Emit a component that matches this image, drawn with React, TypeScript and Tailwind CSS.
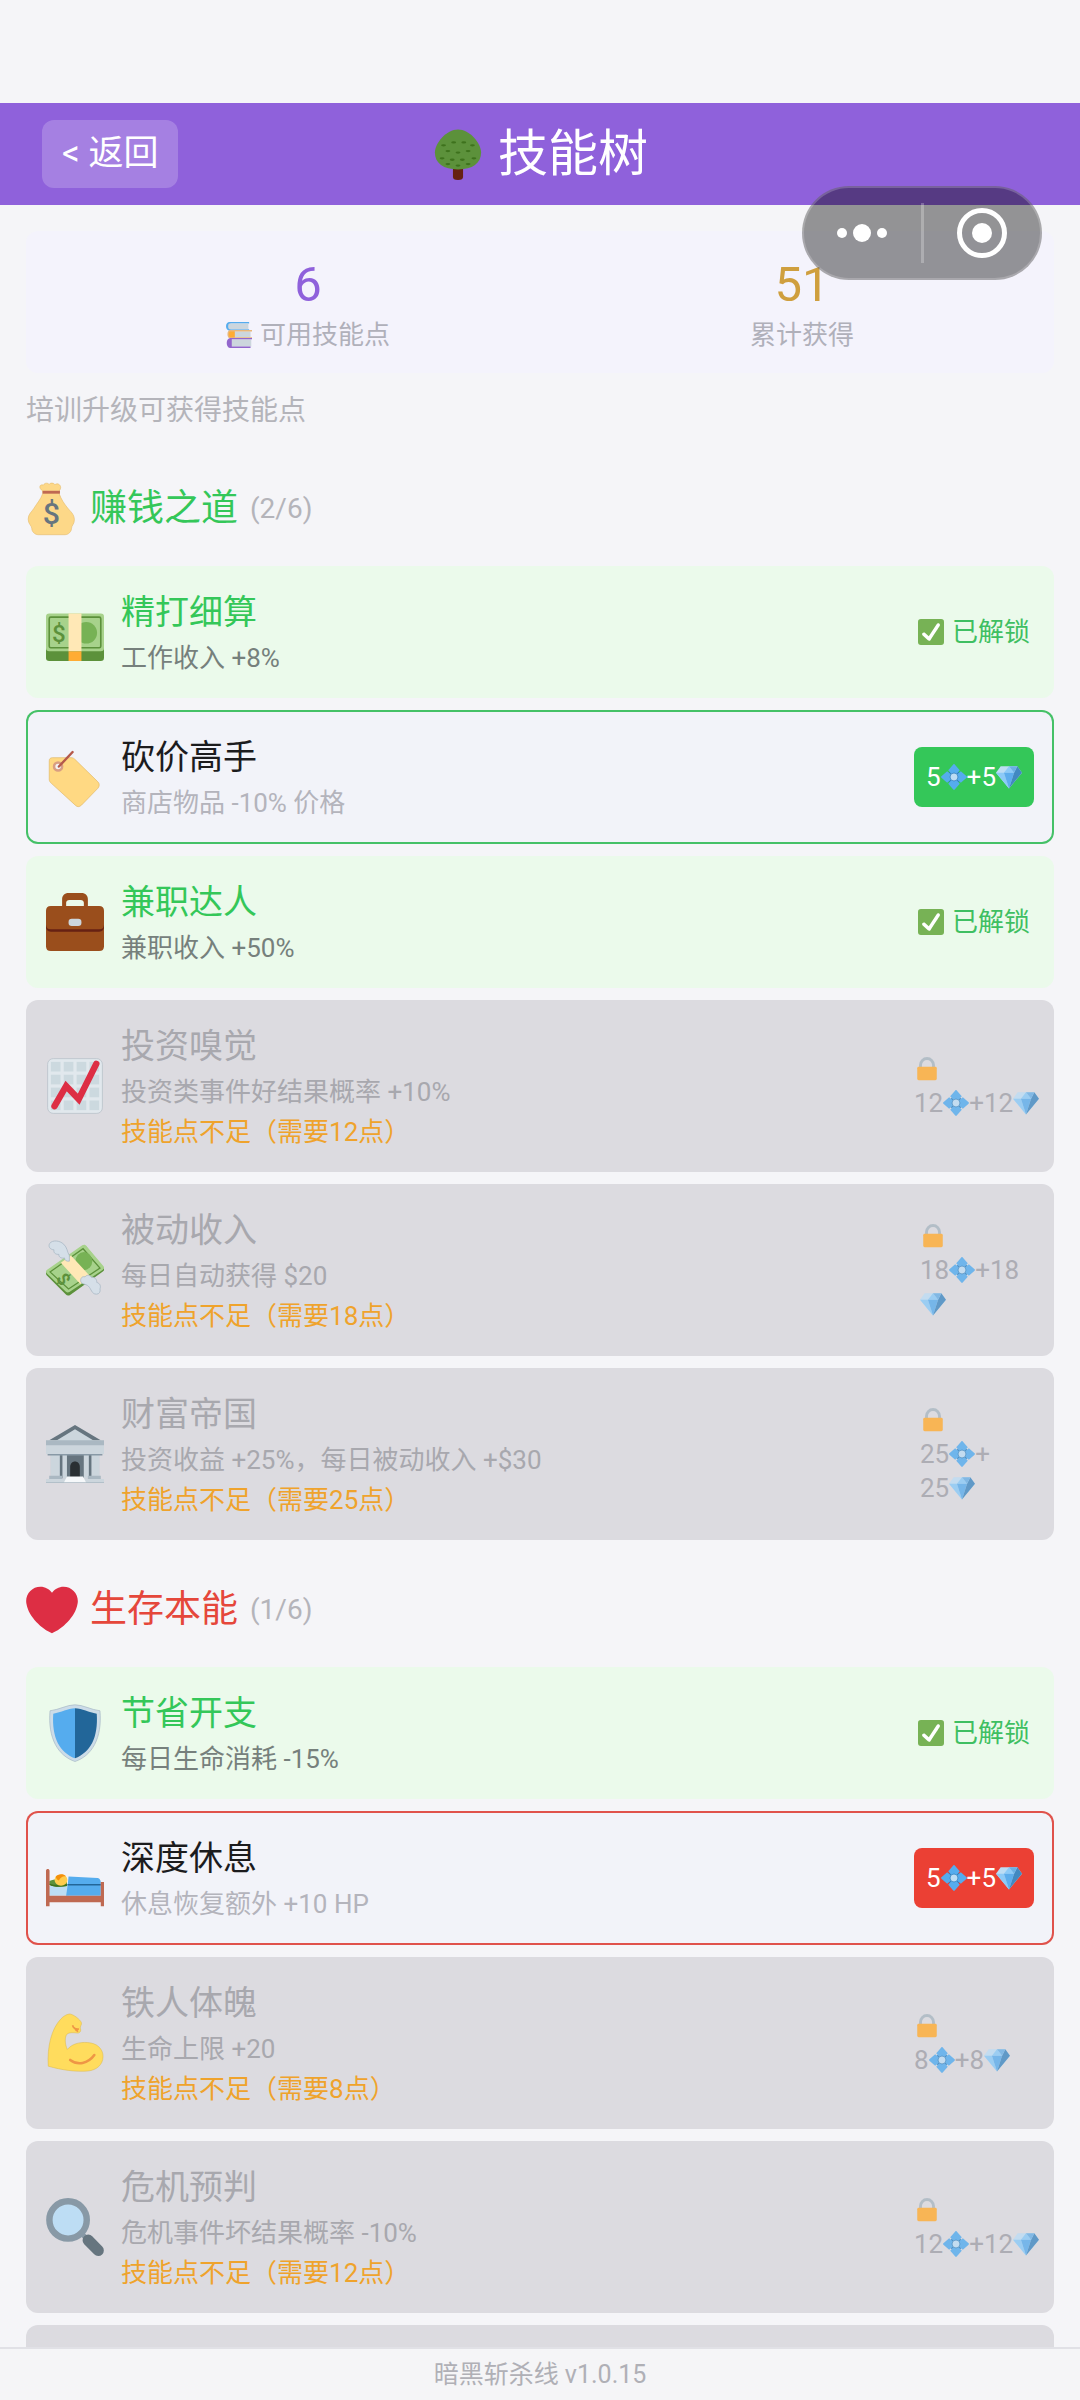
import { useState, type ReactNode } from 'react'
import clsx from 'clsx'

type SkillStatus = 'unlocked' | 'available' | 'locked'
type Theme = 'green' | 'red'

interface Skill {
  id: string
  icon: ReactNode
  name: string
  description: string
  cost: number
  status: SkillStatus
}

interface SkillBranch {
  id: string
  icon: ReactNode
  name: string
  theme: Theme
  unlocked: number
  total: number
  skills: Skill[]
}

interface EmojiProps {
  className: string
  children: ReactNode
}

function Emoji({ className, children }: EmojiProps) {
  return (
    <svg viewBox="0 0 36 36" aria-hidden="true" className={clsx('shrink-0 overflow-visible', className)}>
      {children}
    </svg>
  )
}

const treeDots = [
  [8, 12], [15, 10], [22, 10], [28, 12], [11, 16], [18, 17], [25, 16],
  [7, 21], [14, 22], [21, 22], [29, 21], [11, 25], [18, 26], [25, 25],
]

function TreeIcon() {
  return (
    <Emoji className="size-[52px]">
      <path fill="#662113" d="M14.5 25h7v9c0 1.500-1 2-3.500 2s-3.500-.5-3.500-2z" />
      <path
        fill="#5C913B"
        d="M34 17c0 7.500-6 11.700-16 11.700S2 24.500 2 17C2 10.500 10 1 18 1s16 9.500 16 16z"
      />
      {treeDots.map(([x, y]) => (
        <ellipse key={`${x}-${y}`} cx={x} cy={y} rx="1.700" ry=".8" fill="#3E721D" />
      ))}
    </Emoji>
  )
}

function BooksIcon() {
  return (
    <Emoji className="size-[26px]">
      <path fill="#55ACEE" d="M5 0h27v2H6v8h26v2H5c-3 0-5-2.500-5-6s2-6 5-6z" />
      <path fill="#CCD6DD" d="M5 2h26v8H5c-1.500 0-2-1.500-2-4s.5-4 2-4z" />
      <path fill="#CCD6DD" d="M10 13h24v8H10z" />
      <path fill="#E8B77A" d="M6 11h30v2H12v8h24v2H6c-2.500 0-4-2.500-4-6s1.500-6 4-6z" />
      <path fill="#FFAC33" d="M6 13h6v8H6c-1.500 0-2-1.500-2-4s.5-4 2-4z" />
      <path fill="#CCD6DD" d="M7 24h28v10H7z" />
      <path fill="#9266CC" d="M6 22h30v2H8v10h26v2H6c-3 0-5-3-5-7s2-7 5-7z" />
    </Emoji>
  )
}

function MoneyBagIcon() {
  return (
    <Emoji className="size-[52px]">
      <path
        fill="#FDD888"
        stroke="#E3B96B"
        strokeWidth=".4"
        d="M11.500 5.500C8 3 10 .5 12 1.500c1-2 3.500-1.500 4-.5 1-1.500 3.500-1 4 .2 2-1.700 4 .3 4 1.800 0 1-.5 2-1 2.500v2c1.500 4 3.500 7 6 10 1.500 2 4.500 4 4.500 8 0 3-2 4-2 6s-2 4.300-4.500 4.300H8.500C6 35.800 4 33.500 4 31.500s-2.500-3-2.500-6.500c0-3.500 2.500-5 4-7.500 2.500-4 4.500-6 6-10z"
      />
      <path fill="#BF6952" d="M11.500 5.400h12v2h-12z" />
      <text
        x="17.500"
        y="28.500"
        textAnchor="middle"
        fontSize="21"
        fontWeight="500"
        fontFamily="Roboto"
        fill="#67757F"
      >
        $
      </text>
    </Emoji>
  )
}

function HeartIcon() {
  return (
    <Emoji className="size-[52px]">
      <path
        fill="#DD2E44"
        d="M35.885 11.833c0-5.450-4.418-9.868-9.867-9.868-3.308 0-6.227 1.633-8.018 4.129-1.791-2.496-4.710-4.129-8.017-4.129-5.450 0-9.868 4.417-9.868 9.868 0 .772.098 1.520.266 2.241C1.751 22.587 11.216 31.568 18 34.034c6.783-2.466 16.249-11.447 17.617-19.959.170-.721.268-1.469.268-2.242z"
      />
    </Emoji>
  )
}

function CashIcon() {
  return (
    <Emoji className="size-[58px]">
      <rect y="24" width="36" height="12" rx="2" fill="#5C913B" />
      <rect y="6.500" width="36" height="23.500" rx="2" fill="#A7D28B" />
      <rect x="2" y="8.800" width="32" height="19" rx="1" fill="none" stroke="#5C913B" />
      <circle cx="25" cy="18.500" r="6.700" fill="#77B255" />
      <text x="8" y="24" textAnchor="middle" fontSize="15" fontWeight="500" fontFamily="Roboto" fill="#5C913B">
        $
      </text>
      <path fill="#FFE8B6" d="M14 6.500h8V30h-8z" />
      <path fill="#FFAC33" d="M14 30h8v6h-8z" />
    </Emoji>
  )
}

function TagIcon() {
  return (
    <Emoji className="size-[58px]">
      <path
        fill="#FFD983"
        stroke="#E0B564"
        strokeWidth=".4"
        d="M4 6h11.500c1 0 1.700.300 2.400 1l14.300 14c1.200 1.200 1 2.800 0 4L22 35.500c-1.200 1.200-2.700 1.200-3.800 0L3.200 21.800C2.300 21 2 20.300 2 19.300V8c0-1.300.7-2 2-2z"
      />
      <circle cx="7.500" cy="11.500" r="2.500" fill="#F4F4F6" stroke="#D99E82" strokeWidth="1.600" />
      <path d="M8 11.500l8.500-9" fill="none" stroke="#B5594B" strokeWidth="1.500" strokeLinecap="round" />
    </Emoji>
  )
}

function BriefcaseIcon() {
  return (
    <Emoji className="size-[58px]">
      <path
        fill="#9A4E1C"
        fillRule="evenodd"
        d="M14 0h8c2.500 0 4 1.500 4 4v6H10V4c0-2.500 1.500-4 4-4zm-1.500 9h11V6c0-1-.8-1.700-2-1.700h-7c-1.200 0-2 .7-2 1.700z"
      />
      <path fill="#9A4E1C" d="M0 20h36v13c0 2-1 3-3 3H3c-2 0-3-1-3-3z" />
      <path fill="#662113" d="M0 18h36v3c0 2-1 3-3 3H3c-2 0-3-1-3-3z" />
      <path fill="#9A4E1C" d="M3 8h30c2 0 3 1 3 3v8.500c0 2-1 3-3 3H3c-2 0-3-1-3-3V11c0-2 1-3 3-3z" />
      <rect x="14" y="16" width="8" height="4.500" rx="2" fill="#CCD6DD" />
    </Emoji>
  )
}

function ChartIcon() {
  const steps = [3, 11, 19, 27]
  return (
    <Emoji className="size-[58px]">
      <rect x="1" y="1" width="34" height="34" rx="3.500" fill="#E1E8ED" stroke="#B9C2C9" strokeWidth=".5" />
      {steps.map((x) =>
        steps.map((y) => <rect key={`${x}-${y}`} x={x} y={y} width="6" height="6" fill="#CCD9DF" />),
      )}
      <path
        d="M5.300 30.500l7.200-12.500 7.800 8.200L31.200 4.300"
        fill="none"
        stroke="#DD2E44"
        strokeWidth="4"
        strokeLinecap="round"
        strokeLinejoin="miter"
      />
    </Emoji>
  )
}

function FlyingCashIcon() {
  return (
    <Emoji className="size-[58px]">
      <path
        fill="#5C913B"
        d="M.5 19L22.500 3.200c1-.7 2-.4 2.700.5l10.500 13c.6.8.4 1.700-.4 2.300L15 33.500c-1 .6-2 .5-2.800-.4L.4 21.200c-.6-.8-.6-1.600.1-2.200z"
      />
      <path
        fill="#A7D28B"
        d="M.5 18L22.500 2.700c1-.7 2-.4 2.700.5l10.500 12.500c.6.8.4 1.600-.4 2.200L14.500 31.700c-.8.5-1.600.4-2.300-.4L.4 20C-.2 19.300-.2 18.500.5 18z"
      />
      <path
        fill="none"
        stroke="#5C913B"
        strokeWidth=".8"
        d="M2.500 19.200L23 4.800l10.500 12L14 29.800z"
      />
      <ellipse cx="23.500" cy="12.500" rx="5.200" ry="5.600" fill="#77B255" />
      <text
        x="11"
        y="27.500"
        textAnchor="middle"
        fontSize="11"
        fontWeight="700"
        fontFamily="Roboto"
        fill="#5C913B"
        transform="rotate(55 11 23.500)"
      >
        $
      </text>
      <path fill="#FFE8B6" d="M9.200 13.500L15.500 9l12 13-6.200 4.700z" />
      <path
        fill="#D5DFE8"
        stroke="#A9B8C4"
        strokeWidth=".5"
        d="M14.500 12.500c-2 .3-3-.7-3-2-2 .5-3.800-.6-3.500-2.200-2.300.2-3.500-1.300-3-2.800C2.500 5.300 1.200 3.500 2.300 1.500 4-.8 8.500-.4 11 2c2.300 2.200 2 4.500 3.500 7z"
      />
      <path
        fill="#D5DFE8"
        stroke="#A9B8C4"
        strokeWidth=".5"
        d="M21.500 24.500c0-1.700 1.300-2.800 2.700-2.200 1-1.500 3.200-1.300 4 .2 2-.3 3.500 1.400 3.300 3.200 2 .5 2.700 2.300 2 4 .5 1.800-.5 3.300-2.200 3.300-3 0-3-3-5-5-1.500-1.500-4.800-1-4.800-3.500z"
      />
    </Emoji>
  )
}

function BankIcon() {
  return (
    <Emoji className="size-[58px]">
      <path fill="#AAB8C2" d="M3 18h30v15H3z" />
      <path fill="#66757F" d="M12.500 18h11v15h-11zM8.500 18h1.800v15H8.500zM26.500 18h1.800v15h-1.800z" />
      <path fill="#CCD6DD" d="M3 18h5.500v15H3zM10.300 18h2.700v15h-2.700zM23.500 18h3v15h-3zM28.300 18h4.700v15h-4.700z" />
      <path fill="#292F33" d="M15 33v-7c0-2 1.300-3.300 3-3.300s3 1.300 3 3.300v7z" />
      <path fill="#66757F" d="M18 0l16 9.500H2z" />
      <path fill="#CCD6DD" d="M18 2.700L30 10H6z" />
      <path fill="#AAB8C2" d="M0 9.500h36V13H0z" />
      <path fill="#CCD6DD" d="M0 12.500h36V18H0z" />
      <path fill="#8899A6" d="M1 18h34v1H1z" />
      <path fill="#AAB8C2" d="M2 31.500h8V34H2zM26 31.500h8V34h-8z" />
      <path fill="#CCD6DD" d="M0 33.500h36V36H0z" />
      <path fill="#F5F8FA" d="M13 32h10l2 4H11z" />
      <path fill="#AAB8C2" d="M0 35.500h36v.5H0z" />
    </Emoji>
  )
}

function ShieldIcon() {
  return (
    <Emoji className="size-[58px]">
      <path
        fill="#CCDCE8"
        stroke="#A3B4C2"
        strokeWidth=".4"
        d="M2.500 4.200C8 3.600 13 .5 18 .5s10 3.100 15.500 3.700c1.500 17-5 28-15.500 31.500C7.500 32.200 1 21.200 2.500 4.200z"
      />
      <path fill="#55ACEE" d="M4.500 6c5-.7 9-3.300 13.500-3.300v31C8.500 30 3.500 21 4.500 6z" />
      <path fill="#226699" d="M31.500 6C26.500 5.300 22.500 2.700 18 2.700v31C27.500 30 32.500 21 31.500 6z" />
    </Emoji>
  )
}

function BedIcon() {
  return (
    <Emoji className="size-[58px]">
      <path fill="#BDDDF4" d="M2 23h12v6H2z" />
      <path fill="#5C913B" d="M2 20c2-1.500 7-1.500 11 0v3c-4 .8-9 .6-11-1z" />
      <path fill="#3E721D" d="M2 21.500c3 .9 8 1 11 .3V23c-4 .8-9 .6-11-.8z" />
      <ellipse cx="9.300" cy="19.300" rx="4" ry="3.500" fill="#FFCC4D" />
      <path fill="#F4900C" d="M6 17.200C7 15.500 11 15 12.500 17c-2.500-.3-3.500 1-4.500 2.500-1-.3-1.500-1-2-2.300z" />
      <path fill="#55ACEE" d="M14 17l18 1c1.500.2 2 1.500 2 3v8H12.500l1-7z" />
      <path fill="#226699" d="M13.300 21.700H34v.9H13.200z" />
      <path fill="#BF6952" d="M0 13.500c0-1.500 2.200-1.500 2.200 0V29H34v-8.500h2v15h-2V33H2.200v2.500H0z" />
    </Emoji>
  )
}

function MuscleIcon() {
  return (
    <Emoji className="size-[58px]">
      <path
        fill="#FFDC5D"
        stroke="#D9B548"
        strokeWidth=".3"
        d="M14.500 0c2-.2 7 3.500 7.500 5.500.2 1.500-1 2.300-.7 3.300.7 1.700-.2 3.200-2 3-2.800-.4-5-.3-6.300.7-1.500 2-1.300 6 .2 9.500 3-3.500 7.500-4.600 12.500-4.300 6 .3 9.800 4 9.700 8.800-.1 5-3.900 8.300-9.400 8.900-8 .6-16-.6-24.600-3C.6 20 3.500 9 9.300 3 10.800 1.500 12.500.2 14.500 0z"
      />
      <path d="M15 28.500c4.500 3.500 11 2.500 15-3" fill="none" stroke="#EF9645" strokeWidth="1.600" strokeLinecap="round" />
      <path d="M16.500 7c.5 2 2.500 2.500 4 2.300M17.500 8.500c.5 1 1.500 2 2.500 2.300" fill="none" stroke="#EF9645" strokeWidth="1" />
    </Emoji>
  )
}

function MagnifierIcon() {
  return (
    <Emoji className="size-[58px]">
      <path d="M23 23l4 4" stroke="#8899A6" strokeWidth="3" />
      <path d="M26.200 26.200l6.200 6.300" stroke="#66757F" strokeWidth="7" strokeLinecap="round" />
      <circle cx="13.700" cy="13.600" r="11.600" fill="#BDDDF4" stroke="#8899A6" strokeWidth="4" />
    </Emoji>
  )
}

function CheckIcon() {
  return (
    <Emoji className="size-[26px]">
      <rect width="36" height="36" rx="4" fill="#77B255" />
      <path
        fill="#fff"
        d="M29.280 6.362c-1.156-.751-2.704-.422-3.458.736L14.936 23.877l-5.029-4.650c-1.014-.938-2.596-.875-3.533.138-.937 1.014-.875 2.596.139 3.533l7.209 6.666c.480.445 1.090.665 1.696.665.673 0 1.534-.282 2.099-1.139.332-.506 12.500-19.270 12.500-19.270.751-1.159.421-2.707-.737-3.458z"
      />
    </Emoji>
  )
}

function PointIcon() {
  return (
    <Emoji className="size-[26px]">
      <path fill="#2B7BB9" d="M18 5l13 13-13 13L5 18z" />
      {[0, 90, 180, 270].map((angle) => (
        <path
          key={angle}
          fill="#55ACEE"
          d="M17 .6c.6-.7 1.400-.7 2 0l7 7.900-4.500 5.500h-7L10 8.500z"
          transform={`rotate(${angle} 18 18)`}
        />
      ))}
      <circle cx="18" cy="18" r="5.500" fill="#BDDDF4" stroke="#2B7BB9" strokeWidth="1" />
    </Emoji>
  )
}

function GemIcon() {
  return (
    <Emoji className="size-[26px]">
      <path fill="#BDDDF4" d="M6.500 3h23L36 12 18 34 0 12z" />
      <path fill="#8CCAF7" d="M0 12h11l7 22zM11 12l7-9 7 9z" />
      <path fill="#5DADEC" d="M11 12h14l-7 22z" />
      <path fill="#4289C1" d="M25 12h11L18 34zM29.500 3L36 12H25z" />
      <path fill="#6BB0E5" d="M18 3h11.500L25 12z" />
    </Emoji>
  )
}

function LockIcon() {
  return (
    <Emoji className="size-[26px]">
      <path d="M9 19v-6.500a9 9 0 0 1 18 0V19" fill="none" stroke="#AAB8C2" strokeWidth="4" />
      <rect x="4.500" y="15" width="27" height="18.500" rx="2" fill="#FFAC33" />
    </Emoji>
  )
}

const branches: SkillBranch[] = [
  {
    id: 'money',
    icon: <MoneyBagIcon />,
    name: '赚钱之道',
    theme: 'green',
    unlocked: 2,
    total: 6,
    skills: [
      { id: 'budget', icon: <CashIcon />, name: '精打细算', description: '工作收入 +8%', cost: 3, status: 'unlocked' },
      { id: 'bargain', icon: <TagIcon />, name: '砍价高手', description: '商店物品 -10% 价格', cost: 5, status: 'available' },
      { id: 'parttime', icon: <BriefcaseIcon />, name: '兼职达人', description: '兼职收入 +50%', cost: 8, status: 'unlocked' },
      { id: 'invest', icon: <ChartIcon />, name: '投资嗅觉', description: '投资类事件好结果概率 +10%', cost: 12, status: 'locked' },
      { id: 'passive', icon: <FlyingCashIcon />, name: '被动收入', description: '每日自动获得 $20', cost: 18, status: 'locked' },
      { id: 'empire', icon: <BankIcon />, name: '财富帝国', description: '投资收益 +25%，每日被动收入 +$30', cost: 25, status: 'locked' },
    ],
  },
  {
    id: 'survival',
    icon: <HeartIcon />,
    name: '生存本能',
    theme: 'red',
    unlocked: 1,
    total: 6,
    skills: [
      { id: 'frugal', icon: <ShieldIcon />, name: '节省开支', description: '每日生命消耗 -15%', cost: 3, status: 'unlocked' },
      { id: 'rest', icon: <BedIcon />, name: '深度休息', description: '休息恢复额外 +10 HP', cost: 5, status: 'available' },
      { id: 'iron', icon: <MuscleIcon />, name: '铁人体魄', description: '生命上限 +20', cost: 8, status: 'locked' },
      { id: 'crisis', icon: <MagnifierIcon />, name: '危机预判', description: '危机事件坏结果概率 -10%', cost: 12, status: 'locked' },
    ],
  },
]

function LockedCost({ cost }: { cost: number }) {
  return (
    <div
      className={clsx(
        'w-[120px] text-[26px] leading-[34px] whitespace-nowrap text-[#a2a2aa] opacity-80',
        cost > 12 && 'px-1.5',
      )}
    >
      <div className="flex h-[34px] items-center">
        <LockIcon />
      </div>
      {cost < 18 && (
        <div className="flex items-center">
          {cost}
          <PointIcon />+{cost}
          <GemIcon />
        </div>
      )}
      {cost >= 18 && cost < 20 && (
        <>
          <div className="flex items-center">
            {cost}
            <PointIcon />+{cost}
          </div>
          <div className="flex h-[34px] items-center">
            <GemIcon />
          </div>
        </>
      )}
      {cost >= 20 && (
        <>
          <div className="flex items-center">
            {cost}
            <PointIcon />+
          </div>
          <div className="flex items-center">
            {cost}
            <GemIcon />
          </div>
        </>
      )}
    </div>
  )
}

interface SkillCardProps {
  skill: Skill
  theme: Theme
  onUnlock: (skill: Skill) => void
}

function SkillCard({ skill, theme, onUnlock }: SkillCardProps) {
  const { status } = skill
  return (
    <li
      className={clsx(
        'flex items-center gap-[17px] rounded-xl px-5',
        status === 'available' ? 'py-[21px]' : 'py-5',
        status === 'unlocked' && 'bg-[#ebfaeb]',
        status === 'available' && 'bg-[#f2f3f9] ring-2 ring-inset',
        status === 'available' && (theme === 'green' ? 'ring-[#45c167]' : 'ring-[#e0524b]'),
        status === 'locked' && 'bg-[#dcdbe0]',
      )}
    >
      {skill.icon}
      <div className="min-w-0 flex-1">
        <h3
          className={clsx(
            'text-[34px] leading-[52px]',
            status === 'unlocked' && 'text-[#34c759]',
            status === 'available' && 'text-[#1c1c1e]',
            status === 'locked' && 'text-[#a8a8ae]',
          )}
        >
          {skill.name}
        </h3>
        <p
          className={clsx(
            'text-[26px] leading-[40px]',
            status === 'unlocked' && 'text-[#76807c]',
            status === 'available' && 'text-[#b4b4bc]',
            status === 'locked' && 'text-[#a8a8ae]',
          )}
        >
          {skill.description}
        </p>
        {status === 'locked' && (
          <p className="text-[26px] leading-[40px] text-[#efa32c]">技能点不足（需要{skill.cost}点）</p>
        )}
      </div>
      {status === 'unlocked' && (
        <div className="flex w-[120px] items-center justify-center gap-2 text-[26px] whitespace-nowrap text-[#3fbf62]">
          <CheckIcon />
          已解锁
        </div>
      )}
      {status === 'available' && (
        <button
          type="button"
          onClick={() => onUnlock(skill)}
          className={clsx(
            'flex h-[60px] w-[120px] items-center justify-center rounded-lg text-[26px] text-white',
            theme === 'green' ? 'bg-[#34c759]' : 'bg-[#eb4034]',
          )}
        >
          {skill.cost}
          <PointIcon />+{skill.cost}
          <GemIcon />
        </button>
      )}
      {status === 'locked' && <LockedCost cost={skill.cost} />}
    </li>
  )
}

export default function App() {
  const [points, setPoints] = useState(6)

  function handleUnlock(skill: Skill) {
    if (points < skill.cost) return
    setPoints(points - skill.cost)
  }

  return (
    <div className="relative flex h-screen flex-col bg-[#f5f5f8] font-['Roboto','Noto_Sans_CJK_SC',sans-serif]">
      <header className="mt-[103px] grid shrink-0 grid-cols-[1fr_auto_1fr] items-center bg-[#8f61db] px-[42px] py-[17px] text-white">
        <button
          type="button"
          className="justify-self-start rounded-xl bg-white/20 px-5 text-[35px] leading-[68px]"
        >
          &lt; 返回
        </button>
        <h1 className="flex items-center gap-[14px] text-[50px] leading-[68px]">
          <TreeIcon />
          技能树
        </h1>
      </header>

      {/* mini program capsule */}
      <div className="absolute top-[186px] right-[38px] z-10 flex h-[94px] w-[240px] items-center rounded-full border-2 border-white/20 bg-black/40 bg-clip-border">
        <button type="button" aria-label="更多" className="flex flex-1 items-center justify-center gap-1.5">
          <span className="size-[10px] rounded-full bg-white" />
          <span className="size-[18px] rounded-full bg-white" />
          <span className="size-[10px] rounded-full bg-white" />
        </button>
        <span className="h-[60px] w-[3px] bg-white/25" />
        <button type="button" aria-label="关闭" className="flex flex-1 items-center justify-center">
          <span className="flex size-[50px] items-center justify-center rounded-full border-[5px] border-white">
            <span className="size-5 rounded-full bg-white" />
          </span>
        </button>
      </div>

      <main className="min-h-0 flex-1 overflow-y-auto px-[26px] pt-[26px] [scrollbar-width:none]">
        <div className="flex justify-around rounded-xl bg-[#f4f3fc] px-5 pt-[22px] pb-5 text-center">
          <div>
            <p className="text-[49px] leading-[64px] text-[#8f61db]">{points}</p>
            <p className="flex items-center gap-2 text-[26px] leading-[36px] text-[#b0b0ba]">
              <BooksIcon />
              可用技能点
            </p>
          </div>
          <div>
            <p className="text-[49px] leading-[64px] text-[#cf9f3e]">51</p>
            <p className="text-[26px] leading-[36px] text-[#b0b0ba]">累计获得</p>
          </div>
        </div>
        <p className="mt-[18px] mb-[52px] text-[28px] leading-[40px] text-[#b4b4ba]">培训升级可获得技能点</p>

        {branches.map((branch) => (
          <section key={branch.id} className="mb-11">
            <div className="mb-[31px] flex items-center gap-3">
              {branch.icon}
              <h2
                className={clsx(
                  'text-[37px] leading-[52px]',
                  branch.theme === 'green' ? 'text-[#34c759]' : 'text-[#e5473b]',
                )}
              >
                {branch.name}
              </h2>
              <span className="text-[28px] text-[#b4b4ba]">
                ({branch.unlocked}/{branch.total})
              </span>
            </div>
            <ul className="flex flex-col gap-3">
              {branch.skills.map((skill) => (
                <SkillCard key={skill.id} skill={skill} theme={branch.theme} onUnlock={handleUnlock} />
              ))}
              {branch.skills.length < branch.total && <li className="h-[172px] rounded-xl bg-[#dcdbe0]" />}
            </ul>
          </section>
        ))}
      </main>

      <footer className="shrink-0 border-t-2 border-[#e1e1e6] bg-[#f5f5f7] text-center text-[25px] leading-[51px] text-[#b0b0b6]">
        暗黑斩杀线 v1.0.15
      </footer>
    </div>
  )
}
